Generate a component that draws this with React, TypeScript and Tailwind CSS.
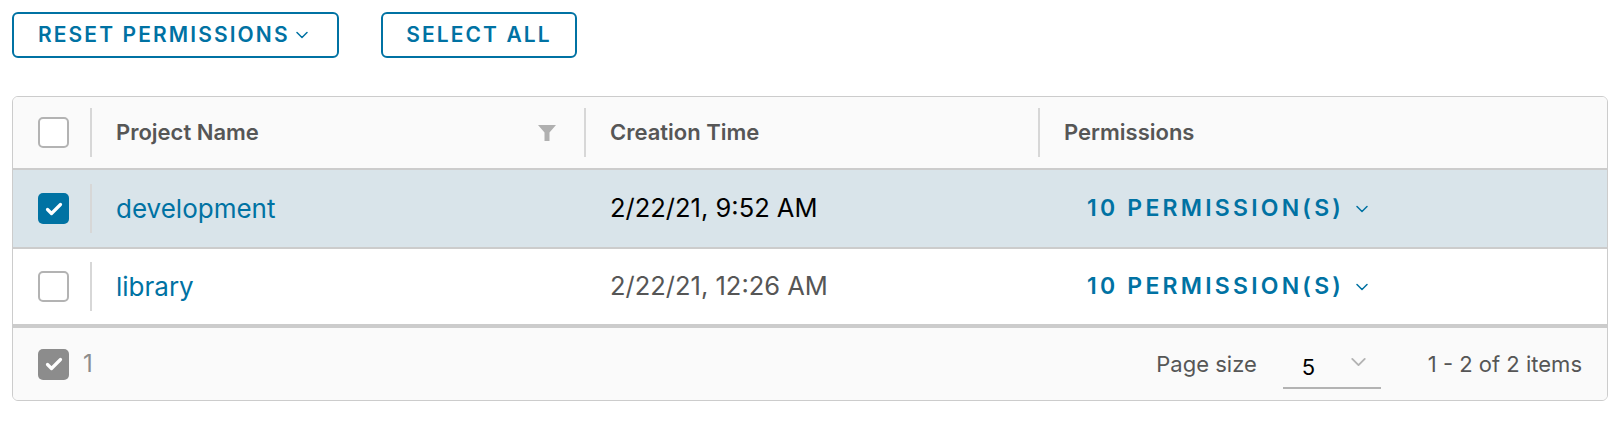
import { useState } from 'react';

interface Project {
  name: string;
  created: string;
  permissions: number;
}

const projects: Project[] = [
  { name: 'development', created: '2/22/21, 9:52 AM', permissions: 10 },
  { name: 'library', created: '2/22/21, 12:26 AM', permissions: 10 },
];

function Chevron({ className = '' }: { className?: string }) {
  return (
    <svg className={className} viewBox="0 0 12 8" fill="none" stroke="currentColor" strokeWidth={1.5}>
      <path d="M1 1.5l5 5 5-5" strokeLinecap="round" strokeLinejoin="round" />
    </svg>
  );
}

function Checkbox({ checked, muted = false }: { checked: boolean; muted?: boolean }) {
  if (checked) {
    return (
      <div
        className={`w-[31px] h-[31px] rounded-[5px] flex items-center justify-center ${
          muted ? 'bg-[#8c8c8c]' : 'bg-[#0072a3]'
        }`}
      >
        <svg className="w-[18px] h-[14px]" viewBox="0 0 18 14" fill="none" stroke="white" strokeWidth={3.2}>
          <path d="M2.5 7.5l4 4 9-9" strokeLinecap="round" strokeLinejoin="round" />
        </svg>
      </div>
    );
  }
  return <div className="w-[31px] h-[31px] rounded-[5px] border-2 border-[#b3b3b3] bg-white" />;
}

function Divider() {
  return <div className="w-[2px] h-[49px] bg-[#d7d7d7] flex-shrink-0" />;
}

export default function App() {
  const [selected, setSelected] = useState<string[]>(['development']);

  function toggle(name: string) {
    setSelected(prev => (prev.includes(name) ? prev.filter(n => n !== name) : [...prev, name]));
  }

  return (
    <div
      className="min-h-screen bg-white px-3 pt-3 text-[#565656]"
      style={{ fontFamily: 'Inter, "Noto Sans", sans-serif' }}
    >
      <div className="flex gap-[42px]">
        <button className="h-[46px] w-[327px] border-2 border-[#0072a3] rounded-[6px] pl-6 flex items-center gap-[6px] text-[#0072a3] text-[21px] font-semibold tracking-[0.1em]">
          RESET PERMISSIONS
          <Chevron className="w-[12px] h-[8px]" />
        </button>
        <button className="h-[46px] w-[196px] border-2 border-[#0072a3] rounded-[6px] flex items-center justify-center text-[#0072a3] text-[21px] font-semibold tracking-[0.1em]">
          SELECT ALL
        </button>
      </div>

      <div className="mt-[38px] w-[1596px] border border-[#cccccc] rounded-[6px] overflow-hidden">
        {/* header */}
        <div className="grid grid-cols-[77px_494px_454px_1fr] h-[73px] bg-[#fafafa] border-b-2 border-[#cccccc] text-[22px] font-semibold text-[#565656]">
          <div className="flex items-center pl-[25px]">
            <Checkbox checked={false} />
          </div>
          <div className="flex items-center">
            <Divider />
            <span className="ml-6 flex-1">Project Name</span>
            <svg className="w-[18px] h-[16px] mr-[28px] text-[#b0b0b0]" viewBox="0 0 18 16" fill="currentColor">
              <path d="M0 0h18l-6.5 7.5V16h-5V7.5z" />
            </svg>
          </div>
          <div className="flex items-center">
            <Divider />
            <span className="ml-[24px]">Creation Time</span>
          </div>
          <div className="flex items-center">
            <Divider />
            <span className="ml-[24px]">Permissions</span>
          </div>
        </div>

        {/* rows */}
        {projects.map((p, i) => {
          const isSelected = selected.includes(p.name);
          return (
            <div
              key={p.name}
              className={`grid grid-cols-[77px_494px_454px_1fr] h-[79px] ${
                i === projects.length - 1 ? 'border-b-[4px]' : 'border-b-2'
              } border-[#cccccc] ${isSelected ? 'bg-[#d9e4ea]' : 'bg-white'}`}
            >
              <div className="flex items-center pl-[25px]" onClick={() => toggle(p.name)}>
                <Checkbox checked={isSelected} />
              </div>
              <div className="flex items-center">
                <Divider />
                <span className="ml-6 text-[26px] text-[#0072a3]">{p.name}</span>
              </div>
              <div className="flex items-center">
                <span className={`ml-[26px] text-[25.5px] ${isSelected ? 'text-black' : 'text-[#565656]'}`}>
                  {p.created}
                </span>
              </div>
              <div className="flex items-center">
                <span className="ml-[49px] flex items-center gap-[12px] text-[23px] font-semibold tracking-[0.14em] text-[#0072a3]">
                  {p.permissions} PERMISSION(S)
                  <Chevron className="w-[12px] h-[8px]" />
                </span>
              </div>
            </div>
          );
        })}

        {/* footer */}
        <div className="h-[72px] bg-[#fafafa] flex items-center pl-[25px] pr-[25px] text-[22px] text-[#565656]">
          <Checkbox checked muted />
          <span className="ml-[14px] text-[24px] text-[#8c8c8c]">1</span>
          <div className="ml-auto flex items-center">
            <span>Page size</span>
            <div className="ml-[26px] w-[98px] h-[42px] border-b-2 border-[#b3b3b3] flex items-center justify-between pl-[19px] pr-[14px] mt-[8px]">
              <span className="text-black">5</span>
              <Chevron className="w-[17px] h-[10px] text-[#b3b3b3] -mt-[10px]" />
            </div>
            <span className="ml-[47px]">1 - 2 of 2 items</span>
          </div>
        </div>
      </div>
    </div>
  );
}
